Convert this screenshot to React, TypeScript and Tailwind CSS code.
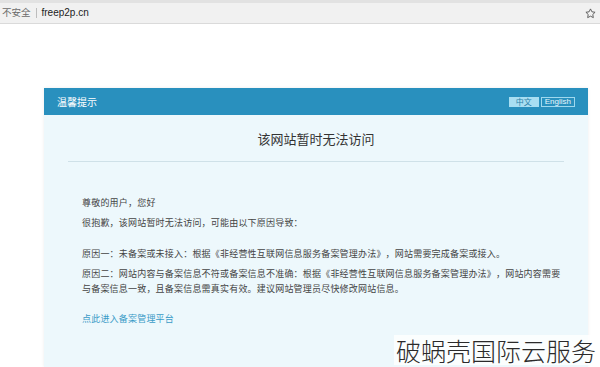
import React from "react";

const font = '"Noto Sans CJK SC", "Liberation Sans", sans-serif';

export default function App() {
  return (
    <div className="w-[600px] h-[367px] bg-white overflow-hidden relative" style={{ fontFamily: font }}>
      {/* browser bar */}
      <div className="h-[3px] bg-[#e2e2e2]" />
      <div className="h-[21px] bg-[#f1f1f1] border-b border-[#dadada] flex items-center pl-[2px] pr-[4px]">
        <span className="text-[9.5px] text-[#6b6b6b] leading-none">不安全</span>
        <span className="mx-[5px] w-px h-[10px] bg-[#bdbdbd]" />
        <span className="text-[10px] text-[#222] leading-none" style={{ fontFamily: '"Liberation Sans", sans-serif' }}>freep2p.cn</span>
        <div className="flex-1" />
        <svg width="11" height="11" viewBox="0 0 24 24" fill="none" stroke="#555" strokeWidth="2" strokeLinejoin="round">
          <polygon points="12 2 15.1 8.3 22 9.3 17 14.1 18.2 21 12 17.8 5.8 21 7 14.1 2 9.3 8.9 8.3 12 2" />
        </svg>
      </div>

      {/* panel */}
      <div className="mt-[64px] ml-[44px] w-[544px] flex flex-col shadow-[0_0_3px_rgba(0,0,0,0.08)]">
        <div className="h-[27px] bg-[#2990be] flex items-center justify-between pl-[13px] pr-[13px]">
          <span className="text-[10px] text-white leading-none">温馨提示</span>
          <div className="flex items-center gap-[2px] text-[8px] leading-none">
            <span className="bg-[#a8def2] text-[#2a7fa8] px-[7px] py-[1px]">中文</span>
            <span className="border border-[#9fd8ee] text-[#e6f6fc] px-[3px] py-0" style={{ fontFamily: '"Liberation Sans", sans-serif' }}>English</span>
          </div>
        </div>
        <div className="bg-[#edf8fc] h-[252px] px-[24px]">
          <div className="h-[47px] flex items-center justify-center border-b border-[#cfe1e8]">
            <span className="text-[13px] text-[#333] leading-none">该网站暂时无法访问</span>
          </div>
          <div className="pl-[14px] pt-[36px] text-[9px] text-[#444] leading-none tracking-[0.2px] [text-spacing-trim:space-all]">
            <p className="leading-[10px]">尊敬的用户，您好</p>
            <p className="mt-[10px] leading-[10px]">很抱歉，该网站暂时无法访问，可能由以下原因导致：</p>
            <p className="mt-[21px] leading-[10px]">原因一：未备案或未接入：根据《非经营性互联网信息服务备案管理办法》，网站需要完成备案或接入。</p>
            <p className="mt-[7px] leading-[15px] whitespace-nowrap">
              原因二：网站内容与备案信息不符或备案信息不准确：根据《非经营性互联网信息服务备案管理办法》，网站内容需要
              <br />
              与备案信息一致，且备案信息需真实有效。建议网站管理员尽快修改网站信息。
            </p>
            <p className="mt-[18px] leading-[10px] text-[#3a9bc7]">点此进入备案管理平台</p>
          </div>
        </div>
      </div>

      {/* watermark */}
      <div className="absolute right-[2px] bottom-[2px] bg-white/80 px-[2px] text-[25px] leading-[30px] text-[#2a2a2a]" style={{ fontFamily: '"Noto Sans CJK SC", sans-serif', fontWeight: 300 }}>
        破蜗壳国际云服务
      </div>
    </div>
  );
}
